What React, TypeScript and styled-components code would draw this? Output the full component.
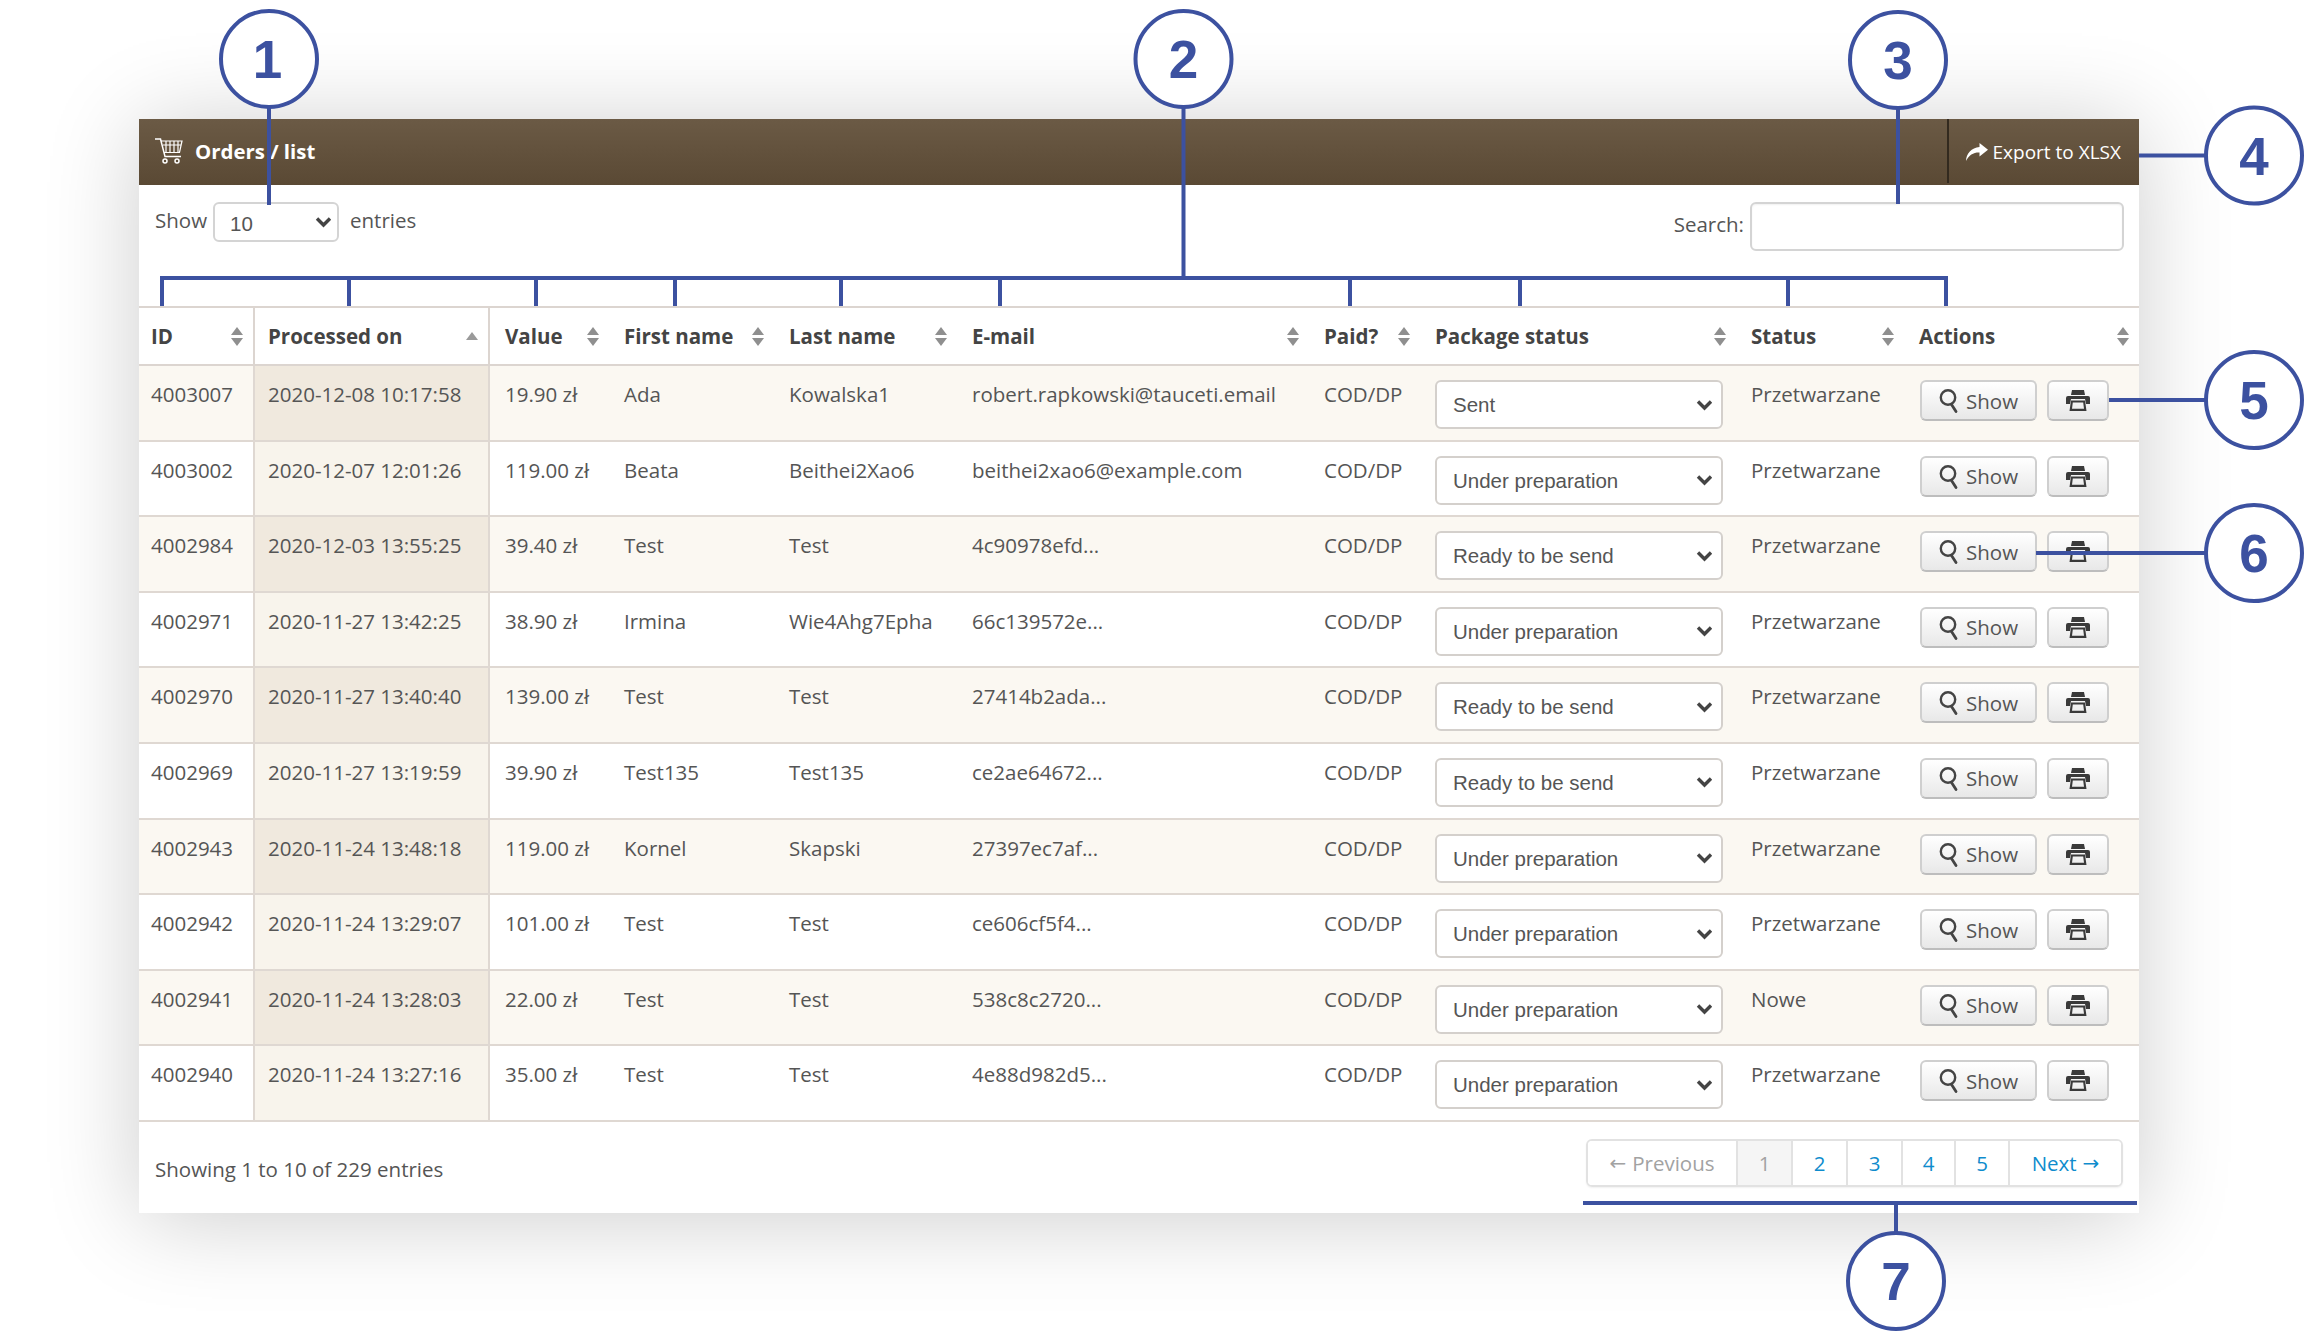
import React from "react";
import styled, { createGlobalStyle } from "styled-components";

const BLUE = "#3c51a0";
const COLUMNS = "114px 237px 119px 165px 183px 352px 111px 316px 168px 235px";
const CHEVRON =
  "url(\"data:image/svg+xml;utf8,<svg xmlns='http://www.w3.org/2000/svg' width='17' height='12' viewBox='0 0 17 12'><path d='M2 2.5 L8.5 9 L15 2.5' fill='none' stroke='%23444' stroke-width='3.4'/></svg>\")";
const SYSTEM_FONT = `"Liberation Sans", Arial, sans-serif`;

const Global = createGlobalStyle`
  html, body { margin: 0; padding: 0; background: #fff; overflow: hidden; }
  body { font-family: "Open Sans", "Noto Sans", sans-serif; font-size: 20.5px; color: #555; }
  * { box-sizing: border-box; }
`;

const Page = styled.div`
  position: relative;
  width: 2311px;
  height: 1337px;
  padding: 119px 0 0 139px;
  overflow: hidden;
`;

const Panel = styled.section`
  width: 2000px;
  height: 1094px;
  background: #fff;
  box-shadow: 0 6px 88px rgba(0, 0, 0, 0.2);
`;

const TitleBar = styled.header`
  height: 66px;
  display: flex;
  align-items: stretch;
  justify-content: space-between;
  background: linear-gradient(#6b5a45, #5a4934);
  color: #fff;
`;

const Title = styled.h1`
  margin: 0;
  padding: 0 0 2px 16px;
  display: flex;
  align-items: center;
  gap: 12px;
  font-size: 20.4px;
  font-weight: 700;
`;

const ExportButton = styled.div`
  width: 192px;
  margin-bottom: 2px;
  padding: 2px 18px 0 0;
  border-left: 2px solid #332a1f;
  display: flex;
  align-items: center;
  justify-content: flex-end;
  gap: 4px;
  font-size: 19px;
`;

const Controls = styled.div`
  height: 121px;
  display: flex;
  justify-content: space-between;
  align-items: flex-start;
  padding: 17px 15px 0 16px;
`;

const LengthLabel = styled.label`
  display: flex;
  align-items: center;
  gap: 6px;
  height: 40px;
  padding-bottom: 4px;
`;

const LengthSelect = styled.select`
  appearance: none;
  width: 126px;
  height: 40px;
  margin: 0 5px 0 0;
  padding: 2px 0 0 15px;
  font: 20.5px ${SYSTEM_FONT};
  color: #555;
  background: #fff ${CHEVRON} no-repeat right 5px center;
  border: 2px solid #d4d4d4;
  border-radius: 6px;
  position: relative;
  top: 2px;
`;

const SearchLabel = styled.label`
  display: flex;
  align-items: center;
  gap: 6px;
`;

const SearchCaption = styled.span`
  padding-bottom: 5px;
`;

const SearchInput = styled.input`
  width: 374px;
  height: 49px;
  background: #fff;
  border: 2px solid #d4d4d4;
  border-radius: 6px;
  box-shadow: inset 0 1px 2px rgba(0, 0, 0, 0.06);
`;

const HeadRow = styled.div`
  display: grid;
  grid-template-columns: ${COLUMNS};
  height: 60px;
  border-top: 2px solid #dcd5d0;
  border-bottom: 2px solid #dcd5d0;
`;

const HeadCell = styled.div<{ $divided?: boolean; $first?: boolean }>`
  display: flex;
  align-items: center;
  justify-content: space-between;
  padding: 0 10px 0 ${(p) => (p.$first ? 12 : p.$divided ? 13 : 15)}px;
  font-weight: 700;
  color: #444;
  ${(p) => p.$divided && "border-left: 2px solid #dcd5d0; border-right: 2px solid #dcd5d0;"}
`;

const Sorter = styled.span`
  display: flex;
  flex-direction: column;
  gap: 3px;
  flex: none;
`;

const Tri = styled.i<{ $down?: boolean; $tone?: string }>`
  display: block;
  width: 0;
  height: 0;
  border-left: 6.5px solid transparent;
  border-right: 6.5px solid transparent;
  ${(p) => (p.$down ? "border-top" : "border-bottom")}: 8px solid ${(p) => p.$tone ?? "#8f8f8f"};
`;

const Row = styled.div<{ $odd: boolean }>`
  display: grid;
  grid-template-columns: ${COLUMNS};
  height: 75.6px;
  border-bottom: 2px solid #dfd8d2;
  background: ${(p) => (p.$odd ? "#fbf8f2" : "#fff")};
`;

const Cell = styled.div<{ $first?: boolean }>`
  padding: 14px 4px 0 ${(p) => (p.$first ? 12 : 15)}px;
  white-space: nowrap;
  line-height: 28px;
`;

const SortedCell = styled(Cell)<{ $odd: boolean }>`
  background: ${(p) => (p.$odd ? "#f0e9de" : "#f8f4ec")};
  border-left: 2px solid #dfd8d2;
  border-right: 2px solid #dfd8d2;
  padding-left: 13px;
`;

const StatusSelect = styled.select`
  appearance: none;
  display: block;
  width: 288px;
  height: 49px;
  margin: 0;
  padding: 0 0 0 16px;
  font: 20.5px ${SYSTEM_FONT};
  color: #555;
  background: #fff ${CHEVRON} no-repeat right 8px center;
  border: 2px solid #d4d0cc;
  border-radius: 6px;
`;

const Actions = styled.div`
  padding: 14px 0 0 16px;
  display: flex;
  gap: 10px;
`;

const Button = styled.div<{ $wide?: boolean }>`
  width: ${(p) => (p.$wide ? 117 : 62)}px;
  height: 41px;
  display: flex;
  align-items: center;
  justify-content: center;
  gap: 7px;
  color: #555;
  font-size: 20.5px;
  background: linear-gradient(#fff, #e8e8e8);
  border: 2px solid #cfcfcf;
  border-bottom-color: #bdbdbd;
  border-radius: 6px;
`;

const Footer = styled.div`
  display: flex;
  justify-content: space-between;
  align-items: flex-start;
  padding: 17px 16px 0 16px;
`;

const Info = styled.div`
  padding-top: 16px;
`;

const Pager = styled.nav`
  display: flex;
  height: 48px;
  border: 2px solid #e2e2e2;
  border-radius: 6px;
  box-shadow: 0 1px 2px rgba(0, 0, 0, 0.06);
  overflow: hidden;
`;

const PageLink = styled.a<{ $w: number; $off?: boolean; $current?: boolean }>`
  width: ${(p) => p.$w}px;
  display: flex;
  align-items: center;
  justify-content: center;
  gap: 6px;
  color: ${(p) => (p.$off || p.$current ? "#a2a2a2" : "#0f8ccd")};
  background: ${(p) => (p.$current ? "#f5f5f5" : "#fff")};
  border-left: 2px solid #e2e2e2;
  &:first-child { border-left: 0; }
`;

const Arrow = styled.span`
  font-family: "DejaVu Sans", sans-serif;
  font-size: 20px;
`;

const Overlay = styled.svg`
  position: absolute;
  inset: 0;
  pointer-events: none;
`;

const CalloutNumber = styled.text`
  font-family: "Liberation Sans", Arial, sans-serif;
  font-size: 53px;
  font-weight: 700;
  fill: ${BLUE};
  text-anchor: middle;
`;

const rows = [
  ["4003007", "2020-12-08 10:17:58", "19.90 zł", "Ada", "Kowalska1", "robert.rapkowski@tauceti.email", "Sent", "Przetwarzane"],
  ["4003002", "2020-12-07 12:01:26", "119.00 zł", "Beata", "Beithei2Xao6", "beithei2xao6@example.com", "Under preparation", "Przetwarzane"],
  ["4002984", "2020-12-03 13:55:25", "39.40 zł", "Test", "Test", "4c90978efd...", "Ready to be send", "Przetwarzane"],
  ["4002971", "2020-11-27 13:42:25", "38.90 zł", "Irmina", "Wie4Ahg7Epha", "66c139572e...", "Under preparation", "Przetwarzane"],
  ["4002970", "2020-11-27 13:40:40", "139.00 zł", "Test", "Test", "27414b2ada...", "Ready to be send", "Przetwarzane"],
  ["4002969", "2020-11-27 13:19:59", "39.90 zł", "Test135", "Test135", "ce2ae64672...", "Ready to be send", "Przetwarzane"],
  ["4002943", "2020-11-24 13:48:18", "119.00 zł", "Kornel", "Skapski", "27397ec7af...", "Under preparation", "Przetwarzane"],
  ["4002942", "2020-11-24 13:29:07", "101.00 zł", "Test", "Test", "ce606cf5f4...", "Under preparation", "Przetwarzane"],
  ["4002941", "2020-11-24 13:28:03", "22.00 zł", "Test", "Test", "538c8c2720...", "Under preparation", "Nowe"],
  ["4002940", "2020-11-24 13:27:16", "35.00 zł", "Test", "Test", "4e88d982d5...", "Under preparation", "Przetwarzane"],
];

const headers = ["ID", "Processed on", "Value", "First name", "Last name", "E-mail", "Paid?", "Package status", "Status", "Actions"];
const statuses = ["Sent", "Under preparation", "Ready to be send"];

const CartIcon = () => (
  <svg width="28" height="26" viewBox="0 0 28 26" fill="none" stroke="#fff" strokeWidth="1.5">
    <path d="M0 1H5.5L10 18.5H26" />
    <path d="M6 3H27L24.5 14.5H9M11 3V14M15 3V14M19 3V14M23 3V14M8 7H26" strokeWidth="1.2" />
    <circle cx="10" cy="23" r="2" />
    <circle cx="22" cy="23" r="2" />
  </svg>
);

const ShareIcon = () => (
  <svg width="24" height="20" viewBox="0 0 24 20" fill="#fff">
    <path d="M14.500 1 23 7.700 14.500 14.500V10.400C8.500 10.200 4 12.800 1 19 1.200 11.500 6.500 5.600 14.500 5Z" />
  </svg>
);

const SearchIcon = () => (
  <svg width="20" height="25" viewBox="0 0 20 25" fill="none" stroke="#444" strokeWidth="2.4">
    <circle cx="9" cy="9.500" r="7.200" />
    <path d="M12.500 16.500 17 23.500" strokeLinecap="round" strokeWidth="2.800" />
  </svg>
);

const PrintIcon = () => (
  <svg width="24" height="21" viewBox="0 0 24 21" fill="#3a3a3a">
    <path d="M6 0H18L19 5H5Z" />
    <path d="M2 6H22Q24 6 24 8V14H20L19 9H5L4 14H0V8Q0 6 2 6Z" />
    <path d="M5 10.500H19L20.500 21H3.500ZM6.800 12.500 6 18.700H18L17.200 12.500Z" fillRule="evenodd" />
  </svg>
);

const Callout = ({ n, x, y }: { n: number; x: number; y: number }) => (
  <g>
    <circle cx={x} cy={y} r="48" fill="#fff" stroke={BLUE} strokeWidth="4" />
    <CalloutNumber x={n === 1 ? x - 1.5 : x} y={y + 19}>{n}</CalloutNumber>
  </g>
);

const ticks = [162, 349, 536, 675, 841, 1000, 1350, 1520, 1788, 1946];

export default function App() {
  return (
    <Page>
      <Global />
      <Panel>
        <TitleBar>
          <Title>
            <CartIcon />
            Orders / list
          </Title>
          <ExportButton>
            <ShareIcon />
            Export to XLSX
          </ExportButton>
        </TitleBar>
        <Controls>
          <LengthLabel>
            Show
            <LengthSelect defaultValue="10">
              <option>10</option>
              <option>25</option>
              <option>50</option>
            </LengthSelect>
            entries
          </LengthLabel>
          <SearchLabel>
            <SearchCaption>Search:</SearchCaption>
            <SearchInput />
          </SearchLabel>
        </Controls>
        <HeadRow>
          {headers.map((h, i) => (
            <HeadCell key={h} $first={i === 0} $divided={i === 1}>
              {h}
              <Sorter>
                {i === 1 ? (
                  <Tri $tone="#9a9a9a" />
                ) : (
                  <>
                    <Tri />
                    <Tri $down />
                  </>
                )}
              </Sorter>
            </HeadCell>
          ))}
        </HeadRow>
        {rows.map((r, i) => {
          const odd = i % 2 === 0;
          return (
            <Row key={r[0]} $odd={odd}>
              <Cell $first>{r[0]}</Cell>
              <SortedCell $odd={odd}>{r[1]}</SortedCell>
              <Cell>{r[2]}</Cell>
              <Cell>{r[3]}</Cell>
              <Cell>{r[4]}</Cell>
              <Cell>{r[5]}</Cell>
              <Cell>COD/DP</Cell>
              <Cell>
                <StatusSelect defaultValue={r[6]}>
                  {statuses.map((s) => (
                    <option key={s}>{s}</option>
                  ))}
                </StatusSelect>
              </Cell>
              <Cell>{r[7]}</Cell>
              <Actions>
                <Button $wide>
                  <SearchIcon />
                  Show
                </Button>
                <Button>
                  <PrintIcon />
                </Button>
              </Actions>
            </Row>
          );
        })}
        <Footer>
          <Info>Showing 1 to 10 of 229 entries</Info>
          <Pager>
            <PageLink $w={148} $off><Arrow>←</Arrow>Previous</PageLink>
            <PageLink $w={55} $current>1</PageLink>
            <PageLink $w={55}>2</PageLink>
            <PageLink $w={55}>3</PageLink>
            <PageLink $w={53}>4</PageLink>
            <PageLink $w={54}>5</PageLink>
            <PageLink $w={113}>Next<Arrow>→</Arrow></PageLink>
          </Pager>
        </Footer>
      </Panel>
      <Overlay width="2311" height="1337" viewBox="0 0 2311 1337" fill="none">
        <g stroke={BLUE} strokeWidth="4">
          <path d="M269 100V205" />
          <path d="M1183.500 100V278" />
          <path d={`M160 278H1948`} />
          {ticks.map((x) => (
            <path key={x} d={`M${x} 278V306`} />
          ))}
          <path d="M1898 100V204" />
          <path d="M2139 155.500H2210" />
          <path d="M2109 400H2210" />
          <path d="M2036 553H2210" />
          <path d="M1583 1203H2137" />
          <path d="M1896 1203V1238" />
        </g>
        <Callout n={1} x={269} y={59} />
        <Callout n={2} x={1183.5} y={59} />
        <Callout n={3} x={1898} y={60} />
        <Callout n={4} x={2254} y={155.5} />
        <Callout n={5} x={2254} y={400} />
        <Callout n={6} x={2254} y={553} />
        <Callout n={7} x={1896} y={1281} />
      </Overlay>
    </Page>
  );
}
